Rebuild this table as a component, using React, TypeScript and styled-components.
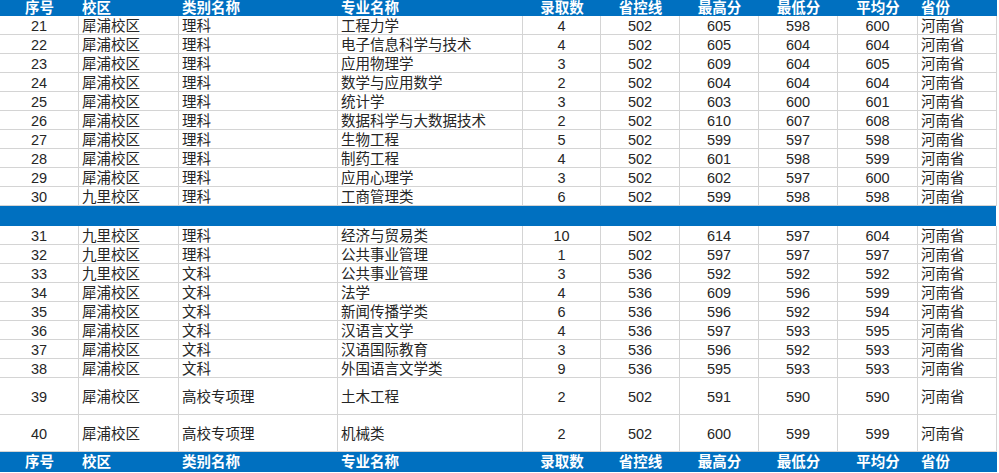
import { FC } from 'react'
import styled, { createGlobalStyle } from 'styled-components'

const GlobalStyle = createGlobalStyle`
  body {
    margin: 0;
    background: #ffffff;
  }
`

const columns = '79px 100px 159px 185px 78px 79px 79px 79px 80px 79px'
const gridLine = '#d4d4d4'
const excelBlue = '#0070c0'

const Sheet = styled.div`
    width: 997px;
    font-family: "Liberation Sans", "Noto Sans CJK SC", sans-serif;
    font-size: 14.5px;
    line-height: 1;
    color: #262626;
`

const Row = styled.div<{ $height: number }>`
    display: grid;
    grid-template-columns: ${columns};
    height: ${(p) => p.$height}px;
`

const HeadRow = styled(Row)`
    background-color: ${excelBlue};
    color: #ffffff;
    font-weight: bold;
`

const HeadCell = styled.div<{ $center?: boolean }>`
    display: flex;
    align-items: center;
    justify-content: ${(p) => (p.$center ? 'center' : 'flex-start')};
    padding-left: ${(p) => (p.$center ? 0 : 3)}px;
    padding-top: 1px;
    white-space: nowrap;
`

const Cell = styled.div<{ $center?: boolean }>`
    display: flex;
    align-items: center;
    justify-content: ${(p) => (p.$center ? 'center' : 'flex-start')};
    padding-left: ${(p) => (p.$center ? 0 : 3)}px;
    padding-top: 2px;
    border-right: 1px solid ${gridLine};
    border-bottom: 1px solid ${gridLine};
    white-space: nowrap;
`

const Band = styled.div`
    height: 20px;
    width: 996px;
    background-color: ${excelBlue};
`

const headers: [string, boolean][] = [
    ['序号', true],
    ['校区', false],
    ['类别名称', false],
    ['专业名称', false],
    ['录取数', true],
    ['省控线', true],
    ['最高分', true],
    ['最低分', true],
    ['平均分', true],
    ['省份', false],
]

type Entry = [number, string, string, string, number, number, number, number, number]

const firstBlock: Entry[] = [
    [21, '犀浦校区', '理科', '工程力学', 4, 502, 605, 598, 600],
    [22, '犀浦校区', '理科', '电子信息科学与技术', 4, 502, 605, 604, 604],
    [23, '犀浦校区', '理科', '应用物理学', 3, 502, 609, 604, 605],
    [24, '犀浦校区', '理科', '数学与应用数学', 2, 502, 604, 604, 604],
    [25, '犀浦校区', '理科', '统计学', 3, 502, 603, 600, 601],
    [26, '犀浦校区', '理科', '数据科学与大数据技术', 2, 502, 610, 607, 608],
    [27, '犀浦校区', '理科', '生物工程', 5, 502, 599, 597, 598],
    [28, '犀浦校区', '理科', '制药工程', 4, 502, 601, 598, 599],
    [29, '犀浦校区', '理科', '应用心理学', 3, 502, 602, 597, 600],
    [30, '九里校区', '理科', '工商管理类', 6, 502, 599, 598, 598],
]

const secondBlock: Entry[] = [
    [31, '九里校区', '理科', '经济与贸易类', 10, 502, 614, 597, 604],
    [32, '九里校区', '理科', '公共事业管理', 1, 502, 597, 597, 597],
    [33, '九里校区', '文科', '公共事业管理', 3, 536, 592, 592, 592],
    [34, '犀浦校区', '文科', '法学', 4, 536, 609, 596, 599],
    [35, '犀浦校区', '文科', '新闻传播学类', 6, 536, 596, 592, 594],
    [36, '犀浦校区', '文科', '汉语言文学', 4, 536, 597, 593, 595],
    [37, '犀浦校区', '文科', '汉语国际教育', 3, 536, 596, 592, 593],
    [38, '犀浦校区', '文科', '外国语言文学类', 9, 536, 595, 593, 593],
]

const tallBlock: Entry[] = [
    [39, '犀浦校区', '高校专项理', '土木工程', 2, 502, 591, 590, 590],
    [40, '犀浦校区', '高校专项理', '机械类', 2, 502, 600, 599, 599],
]

const HeaderRow: FC<{ height: number }> = ({ height }) => (
    <HeadRow $height={height}>
        {headers.map(([label, center]) => (
            <HeadCell key={label} $center={center}>
                {label}
            </HeadCell>
        ))}
    </HeadRow>
)

const DataRow: FC<{ entry: Entry; height: number }> = ({ entry, height }) => {
    const [no, campus, kind, major, admitted, line, high, low, avg] = entry
    return (
        <Row $height={height}>
            <Cell $center>{no}</Cell>
            <Cell>{campus}</Cell>
            <Cell>{kind}</Cell>
            <Cell>{major}</Cell>
            <Cell $center>{admitted}</Cell>
            <Cell $center>{line}</Cell>
            <Cell $center>{high}</Cell>
            <Cell $center>{low}</Cell>
            <Cell $center>{avg}</Cell>
            <Cell>河南省</Cell>
        </Row>
    )
}

const App: FC = () => (
    <>
        <GlobalStyle />
        <Sheet>
            <HeaderRow height={16} />
            {firstBlock.map((e) => (
                <DataRow key={e[0]} entry={e} height={19} />
            ))}
            <Band />
            {secondBlock.map((e) => (
                <DataRow key={e[0]} entry={e} height={19} />
            ))}
            {tallBlock.map((e) => (
                <DataRow key={e[0]} entry={e} height={37} />
            ))}
            <HeaderRow height={20} />
        </Sheet>
    </>
)

export default App
